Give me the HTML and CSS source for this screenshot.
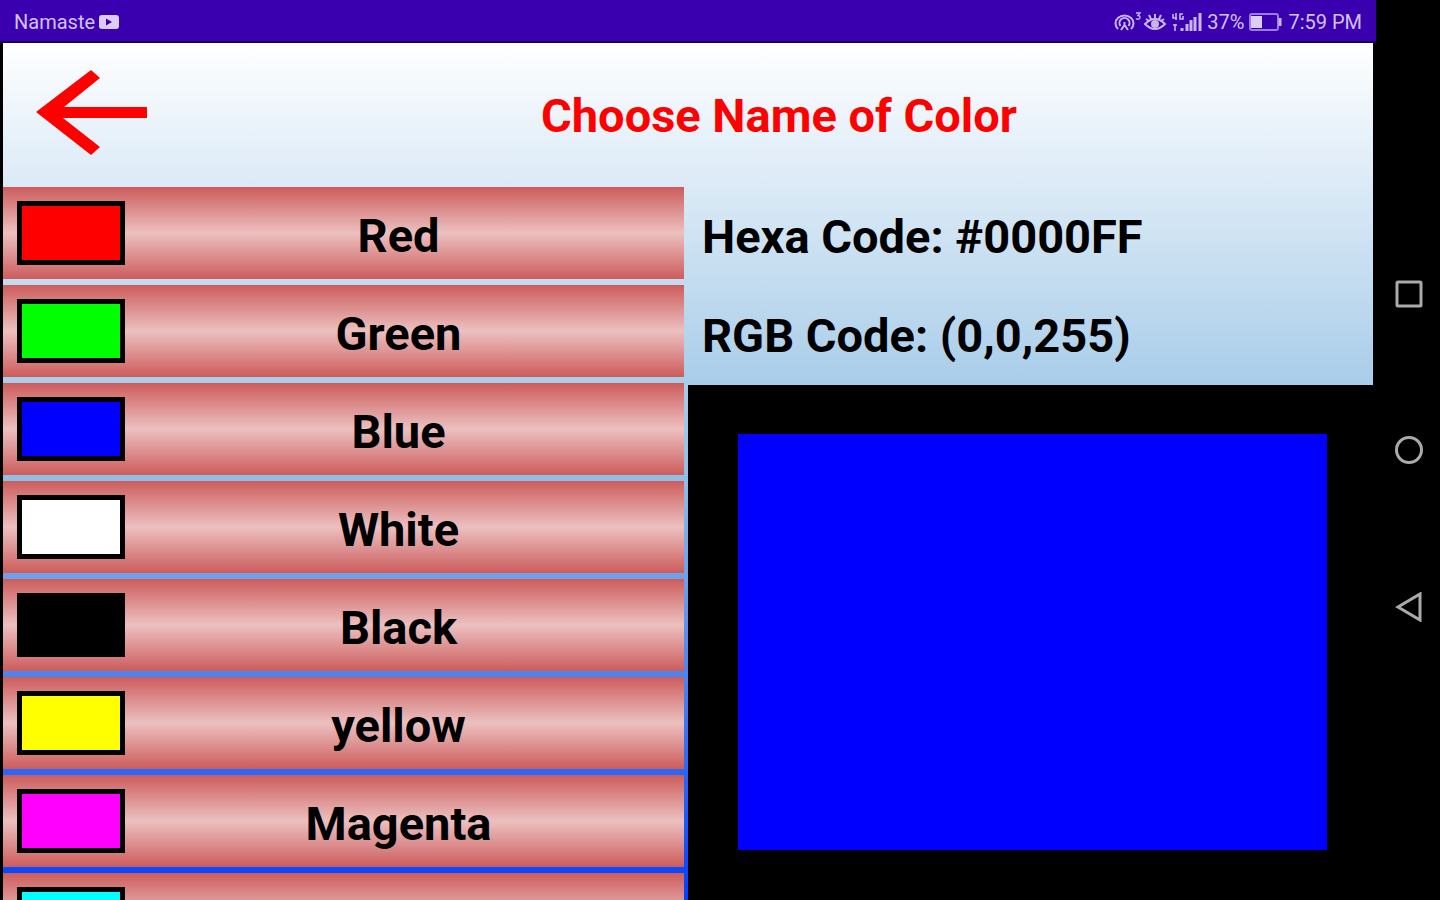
FILE: index.html
```html
<!DOCTYPE html>
<html lang="en">
	<head>
		<meta charset="UTF-8">
		<title>Choose Name of Color</title>
		<link rel="stylesheet" href="styles.css">
	</head>
	<body>
		<div class="screen">
			<!--status bar-->
			<div class="status">
				<div class="status-left">
					<span>Namaste</span>
					<svg width="20" height="14" viewBox="0 0 20 14"><rect width="20" height="14" rx="3" fill="#dccdf6"/><path d="M7 3.5v7l6-3.500z" fill="#3a00b0"/></svg>
				</div>
				<div class="status-right">
					<svg class="status-icons" width="90" height="22" viewBox="0 0 90 22" fill="none" stroke="#c9b6f0" stroke-width="2">
						<!--hotspot-->
						<path d="M5 18a9 8 0 1 1 13 0M7.500 15a5 5 0 1 1 8 0M11.500 11v3M8 19l3.500-5 3.500 5"/>
						<path d="M23 2h4l-2 2.500q3 .5 1.500 3-1.500 1.500-3.500 0" stroke-width="1.400"/>
						<!--eye comfort-->
						<path d="M32 13q10-10 20 0q-10 10-20 0zM42 3v4M36 4l2 4M48 4l-2 4M33 8l3 2M51 8l-3 2"/>
						<circle cx="42" cy="13" r="3" fill="#c9b6f0"/>
						<!--signal-->
						<path d="M60 3v4h4M63 2v7M70 3h-3v5h3v-3M62 13v7M60 14h4" stroke-width="1.600"/>
						<path d="M69 17v3M74 13v7M78 9v11M82 6v14M87 2v18" stroke-width="3"/>
					</svg>
					<span>37%</span>
					<svg class="battery" width="34" height="18" viewBox="0 0 34 18"><rect x="1" y="1" width="28" height="16" rx="2" fill="none" stroke="#9c7ce0" stroke-width="2"/><rect x="2" y="3" width="11" height="12" fill="#dccdf6"/><path d="M31 5v8" stroke="#c9b6f0" stroke-width="3"/></svg>
					<span>7:59 PM</span>
				</div>
			</div>

			<div class="app">
				<div class="header">
					<button class="back" aria-label="Back">
						<svg width="111" height="86" viewBox="0 0 111 86"><path d="M111 37H28L64 8L55 0L0 42L55 85L64 77L27 48H111z" fill="#f00"/></svg>
					</button>
					<h1>Choose Name of Color</h1>
				</div>

				<div class="content">
					<!--color names-->
					<div class="list">
						<button class="item"><span class="swatch red"></span><span class="name">Red</span></button>
						<button class="item"><span class="swatch green"></span><span class="name">Green</span></button>
						<button class="item"><span class="swatch blue"></span><span class="name">Blue</span></button>
						<button class="item"><span class="swatch white"></span><span class="name">White</span></button>
						<button class="item"><span class="swatch black"></span><span class="name">Black</span></button>
						<button class="item"><span class="swatch yellow"></span><span class="name">yellow</span></button>
						<button class="item"><span class="swatch magenta"></span><span class="name">Magenta</span></button>
						<button class="item" aria-label="Cyan"><span class="swatch cyan"></span></button>
					</div>

					<!--selected color-->
					<div class="detail">
						<div class="codes">
							<p>Hexa Code: #0000FF</p>
							<p>RGB Code: (0,0,255)</p>
						</div>
						<div class="preview"><div class="blue"></div></div>
					</div>
				</div>
			</div>
		</div>

		<!--phone navigation-->
		<div class="nav">
			<button aria-label="Recent apps"><svg width="28" height="28" viewBox="0 0 28 28"><rect x="2" y="2" width="24" height="24" rx="1"/></svg></button>
			<button aria-label="Home"><svg width="28" height="28" viewBox="0 0 28 28"><circle cx="14" cy="14" r="12.500"/></svg></button>
			<button aria-label="Go back"><svg width="28" height="30" viewBox="0 0 28 30"><path d="M25 2v26L3 15z"/></svg></button>
		</div>
	</body>
</html>
```
FILE: styles.css
```css
* {
	padding: 0;
	margin: 0;
	box-sizing: border-box;
}

body {
	display: flex;
	height: 100vh;
	overflow: hidden;
	background-color: #000;
	font-family: Roboto, sans-serif;
	color: #000;
}

button {
	border: none;
	background: none;
	font: inherit;
	color: inherit;
	cursor: pointer;
}

svg {
	display: block;
}

.screen {
	flex: 1;
	display: flex;
	flex-direction: column;
	min-width: 0;
}

/* status bar */
.status {
	display: flex;
	justify-content: space-between;
	align-items: center;
	flex: none;
	height: 43px;
	padding: 2px 14px 0;
	background-color: #3a00b0;
	border-bottom: 2px solid #14005c;
	font-size: 20px;
	color: #d3c2f3;
}

.status-left,
.status-right {
	display: flex;
	align-items: center;
	gap: 4px;
}

.battery {
	margin: 0 1px;
}

/* app */
.app {
	flex: 1;
	display: flex;
	flex-direction: column;
	min-height: 0;
	margin: 0 3px;
	background-image: linear-gradient(to bottom, #fff, #93c0e4 50%, #0040ff);
}

.header {
	display: flex;
	align-items: center;
	flex: none;
	height: 144px;
	padding: 0 0 4px 33px;
}

.header h1 {
	flex: 1;
	padding: 4px 0 0 38px;
	font-size: 47px;
	font-weight: 700;
	text-align: center;
	color: #f00;
}

.content {
	flex: 1;
	display: grid;
	grid-template-columns: 1fr 1fr;
	min-height: 0;
}

.list {
	display: flex;
	flex-direction: column;
	gap: 6px;
	padding-right: 4px;
	overflow: hidden;
}

.item {
	display: flex;
	align-items: center;
	flex: none;
	height: 92px;
	padding: 0 26px 0 14px;
	background-image: linear-gradient(to bottom, #cd5c5c, #ecc0c0, #cd5c5c);
}

.swatch {
	width: 108px;
	height: 64px;
	border: 5px solid #000;
}

.name {
	flex: 1;
	padding: 4px 0 0 14px;
	font-size: 47px;
	font-weight: 700;
	text-align: center;
}

.red { background-color: #f00; }
.green { background-color: #0f0; }
.blue { background-color: #00f; }
.white { background-color: #fff; }
.black { background-color: #000; }
.yellow { background-color: #ff0; }
.magenta { background-color: #f0f; }
.cyan { background-color: #0ff; }

.detail {
	display: flex;
	flex-direction: column;
	min-height: 0;
}

.codes {
	padding-left: 14px;
	font-size: 47px;
	font-weight: 700;
	line-height: 99px;
}

.preview {
	flex: 1;
	display: flex;
	padding: 49px 46px 50px 50px;
	background-color: #000;
}

.preview div {
	flex: 1;
}

/* phone navigation */
.nav {
	display: flex;
	flex-direction: column;
	justify-content: center;
	align-items: center;
	gap: 128px;
	flex: none;
	width: 64px;
	padding: 2px 0 0 2px;
}

.nav svg {
	fill: none;
	stroke: #aaa;
	stroke-width: 3;
}
```
